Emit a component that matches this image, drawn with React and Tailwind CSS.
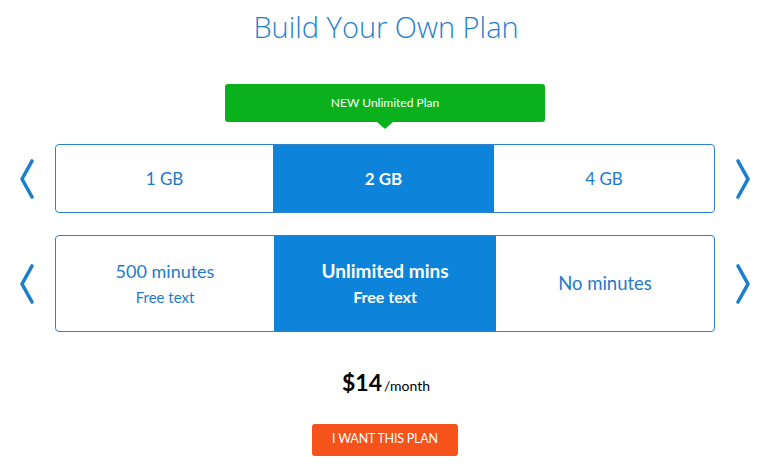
import React from "react";

const Chevron = ({ dir }) => (
  <svg width="20" height="42" viewBox="0 0 20 42" className="shrink-0">
    <path
      d={dir === "left" ? "M15 3 L5 21 L15 39" : "M5 3 L15 21 L5 39"}
      fill="none"
      stroke="#1a7fd0"
      strokeWidth="3.6"
      strokeLinecap="round"
      strokeLinejoin="round"
    />
  </svg>
);

export default function App() {
  return (
    <div className="w-[772px] h-[466px] bg-white overflow-hidden font-['Lato','Open_Sans',sans-serif] text-[#1f7acb]">
      <h1 className="text-center text-[29px] leading-none pt-[12px] h-[84px] text-[#1e7fcf] font-['Open_Sans',sans-serif] font-light">
        Build Your Own Plan
      </h1>
      <div className="flex justify-center">
        <div className="relative ml-[-2px] w-[320px] h-[38px] bg-[#0bb11c] rounded-[3px] flex items-center justify-center text-white text-[12px]">
          NEW Unlimited Plan
          <div className="absolute left-[152px] top-[38px] w-0 h-0 border-l-[8px] border-r-[8px] border-t-[7px] border-l-transparent border-r-transparent border-t-[#0bb11c]" />
        </div>
      </div>
      <div className="flex items-center mt-[22px] h-[69px]">
        <div className="w-[55px] flex justify-start pl-[17px]">
          <Chevron dir="left" />
        </div>
        <div className="w-[660px] h-[69px] border border-[#2a83cc] rounded-[4px] flex overflow-hidden text-[17px]">
          <div className="w-[217px] flex items-center justify-center">1 GB</div>
          <div className="w-[221px] bg-[#0d84d9] flex items-center justify-center text-white font-bold">2 GB</div>
          <div className="flex-1 flex items-center justify-center">4 GB</div>
        </div>
        <div className="flex-1 flex justify-start pl-[18px]">
          <Chevron dir="right" />
        </div>
      </div>
      <div className="flex items-center mt-[22px] h-[97px]">
        <div className="w-[55px] flex justify-start pl-[17px]">
          <Chevron dir="left" />
        </div>
        <div className="w-[660px] h-[97px] border border-[#2a83cc] rounded-[4px] flex overflow-hidden">
          <div className="w-[218px] flex flex-col items-center justify-center">
            <div className="text-[18px] leading-[22px]">500 minutes</div>
            <div className="text-[15px] leading-[20px] mt-[5px]">Free text</div>
          </div>
          <div className="w-[222px] bg-[#0d84d9] flex flex-col items-center justify-center text-white font-bold">
            <div className="text-[19px] leading-[22px]">Unlimited mins</div>
            <div className="text-[16px] leading-[20px] mt-[5px]">Free text</div>
          </div>
          <div className="flex-1 flex items-center justify-center text-[18.5px]">No minutes</div>
        </div>
        <div className="flex-1 flex justify-start pl-[18px]">
          <Chevron dir="right" />
        </div>
      </div>
      <div className="flex justify-center items-baseline mt-[33px] text-black">
        <span className="text-[23px] font-bold">$14</span>
        <span className="text-[14px] ml-[2px]">/month</span>
      </div>
      <div className="flex justify-center mt-[24px]">
        <button className="w-[146px] h-[32px] bg-[#f6521b] rounded-[3px] text-white text-[12.5px] tracking-[-0.2px] ml-[-2px]">
          I WANT THIS PLAN
        </button>
      </div>
    </div>
  );
}
